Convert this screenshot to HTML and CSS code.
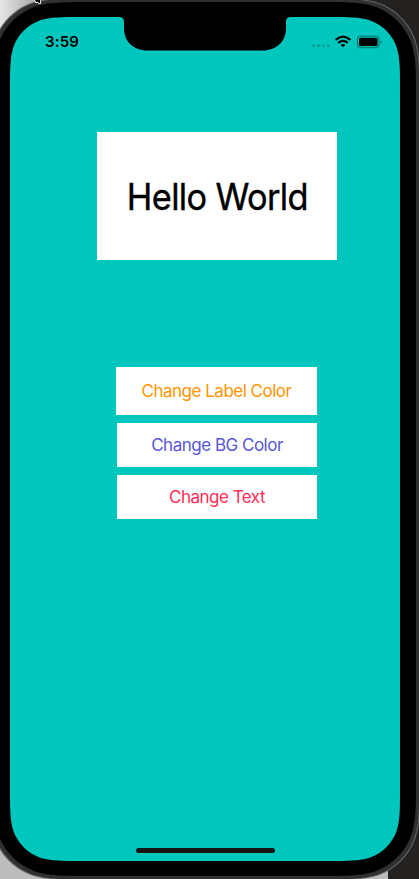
FILE: index.html
```html
<!DOCTYPE html>
<html lang="en">
<head>
<meta charset="utf-8">
<title>Hello World</title>
<link rel="stylesheet" href="styles.css">
</head>
<body>
<svg class="device" viewBox="0 0 419 879" aria-hidden="true">
  <defs>
    <linearGradient id="desk" x1="0" y1="0" x2="1" y2="0"><stop offset="0" stop-color="#e6e6e6"/><stop offset="1" stop-color="#aaa"/></linearGradient>
    <path id="shell" d="M0 -437H-115C-142 -437-156-437-171-432C-187-426-200-413-206-397C-211-382-211-368-211-341V0H0Z"/>
    <path id="glass" d="M0 -422H-123.2C-143.9-422-154.2-422-165.3-418.5C-177.5-414.1-187.1-404.5-191.5-392.3C-195-381.2-195-370.9-195-350.2V0H0Z"/>
    <g id="shell-full"><use href="#shell"/><use href="#shell" transform="scale(-1 1)"/><use href="#shell" transform="scale(1 -1)"/><use href="#shell" transform="scale(-1 -1)"/></g>
    <g id="glass-full"><use href="#glass"/><use href="#glass" transform="scale(-1 1)"/><use href="#glass" transform="scale(1 -1)"/><use href="#glass" transform="scale(-1 -1)"/></g>
  </defs>
  <rect width="419" height="879" fill="#232220"/>
  <rect width="35" height="50" fill="url(#desk)"/>
  <rect y="820" width="388" height="59" fill="#bcbcbc"/>
  <g transform="translate(205 439)">
    <use href="#shell-full" transform="scale(1.0190 1.0092)" fill="#686868"/>
    <use href="#shell-full" transform="scale(1.0150 1.0073)" fill="#303030"/>
    <use href="#shell-full" fill="#000"/>
    <use href="#glass-full" fill="#00c7be"/>
  </g>
  <path d="M119 16V17C123 17 124 19 124 23V28C124 42 134 50.500 147 50.500H263C276 50.500 286 42 286 28V23C286 19 287 17 291 17V16Z"/>
  <path d="M34 -1l2 4 1-1 3 2 1-3-2-3" fill="#000" stroke="#fff" stroke-width="1"/>
</svg>
<div class="screen">
  <header class="status">
    <span class="time">3:59</span>
    <svg class="indicators" viewBox="0 0 72 16" aria-hidden="true">
      <g fill="#009c95"><circle cx="3.700" cy="9.800" r="1.500"/><circle cx="8.600" cy="9.800" r="1.500"/><circle cx="13.400" cy="9.800" r="1.500"/><circle cx="18.200" cy="9.800" r="1.500"/></g>
      <g fill="none" stroke="#000" stroke-width="2.100"><path d="M25.700 3.900Q33 -2.500 40.300 3.900"/><path d="M28.300 6.900Q33 2.900 37.700 6.900"/></g>
      <path d="M30.600 8.900Q33 7 35.400 8.900L33 11.300Z"/>
      <rect x="47.500" y="0.200" width="21.500" height="11.300" rx="3" fill="none" stroke="#00857f" stroke-width="1.300"/>
      <rect x="49" y="1.800" width="18.500" height="8.200" rx="1.500"/>
      <path d="M70.300 4v4Q72 7.200 72 6T70.300 4" fill="#00857f"/>
    </svg>
  </header>
  <main class="content">
    <h1 class="label"><span>Hello World</span></h1>
    <div class="actions">
      <button class="action label-color">Change Label Color</button>
      <button class="action bg-color">Change BG Color</button>
      <button class="action text">Change Text</button>
    </div>
  </main>
  <div class="home"></div>
</div>
</body>
</html>
```
FILE: styles.css
```css
* { box-sizing: border-box; }
body {
  margin: 0;
  width: 419px;
  height: 879px;
  overflow: hidden;
  font-family: Inter, "Liberation Sans", sans-serif;
}
.device {
  position: absolute;
  inset: 0;
  width: 419px;
  height: 879px;
}
.screen {
  position: relative;
  display: flex;
  flex-direction: column;
  width: 390px;
  height: 844px;
  margin: 17px 0 0 10px;
}
.status {
  display: flex;
  justify-content: space-between;
  align-items: flex-start;
  height: 115px;
  padding: 19px 18px 0 35px;
}
.time {
  margin-top: -3px;
  font-size: 15px;
  line-height: 18px;
  font-weight: 600;
  letter-spacing: 0.2px;
}
.indicators { width: 72px; height: 16px; overflow: visible; }
.content {
  display: flex;
  flex-direction: column;
  align-items: flex-start;
  gap: 107px;
}
.label {
  display: flex;
  justify-content: center;
  align-items: center;
  width: 240px;
  height: 128px;
  margin: 0 0 0 87px;
  background: #fff;
  font-size: 37px;
  font-weight: 400;
  letter-spacing: -0.7px;
  white-space: nowrap;
}
.label span {
  display: block;
  transform: scaleX(0.93);
  -webkit-text-stroke: 0.4px #000;
}
.actions {
  display: flex;
  flex-direction: column;
  align-items: flex-end;
  gap: 8px;
  margin-left: 106px;
}
.action {
  width: 200px;
  height: 44px;
  padding: 0;
  border: 0;
  background: #fff;
  font: 400 17px/20px Inter, "Liberation Sans", sans-serif;
  letter-spacing: -0.5px;
}
.label-color { width: 201px; height: 48px; color: #ff9500; }
.bg-color { color: #5856d6; }
.text { color: #ff2d55; }
.home {
  width: 139px;
  height: 5px;
  margin: auto auto 8px 126px;
  border-radius: 3px;
  background: #151515;
}
```
